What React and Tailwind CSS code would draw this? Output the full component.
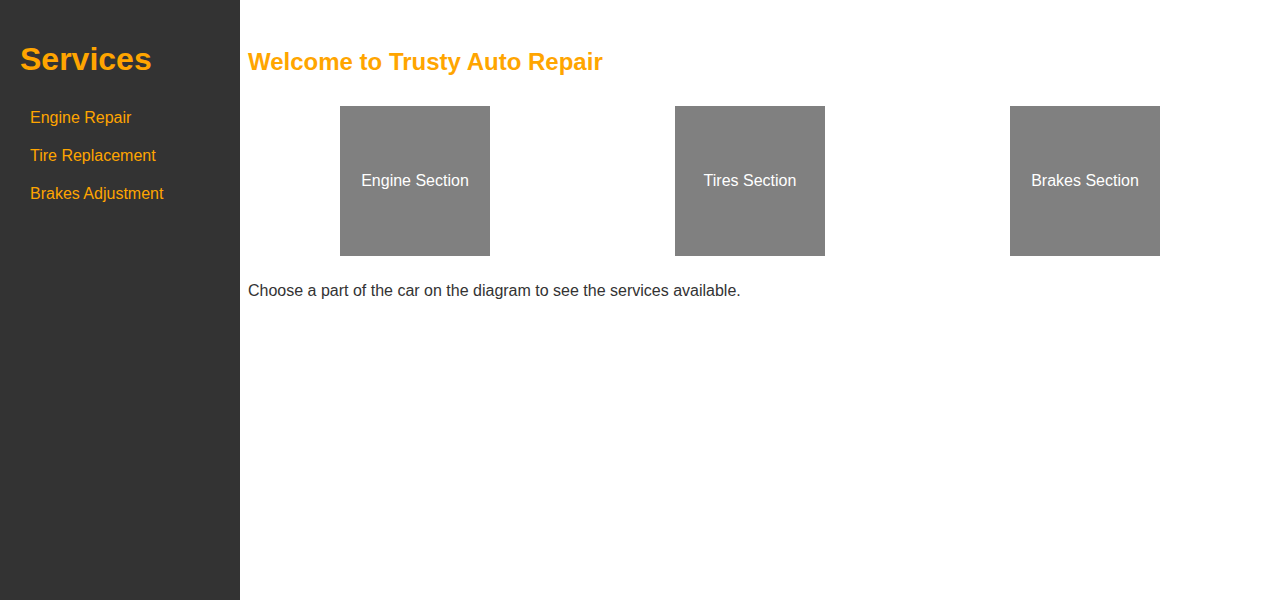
import React from "react";

const links = ["Engine Repair", "Tire Replacement", "Brakes Adjustment"];
const sections = ["Engine Section", "Tires Section", "Brakes Section"];

export default function App() {
  return (
    <div className="flex min-h-[600px] font-['Liberation_Sans',Arial,sans-serif] text-[#333]">
      {/* sidebar */}
      <aside className="w-[240px] shrink-0 bg-[#333] px-5">
        <h1 className="mt-[41px] text-[32px] leading-[37px] font-bold text-[#ffa500]">Services</h1>
        <ul className="mt-[21px] pl-[10px]">
          {links.map((l) => (
            <li key={l} className="py-[10px] text-base leading-[18px]">
              <a href="#" className="text-[#ffa500]">{l}</a>
            </li>
          ))}
        </ul>
      </aside>

      <main className="flex-1 pl-2 pt-12">
        <h2 className="text-2xl leading-[28px] font-bold text-[#ffa500]">Welcome to Trusty Auto Repair</h2>
        <div className="mt-[30px] flex gap-[185px] pl-[92px]">
          {sections.map((s) => (
            <div key={s} className="flex h-[150px] w-[150px] items-center justify-center bg-[#808080] text-base text-white">
              {s}
            </div>
          ))}
        </div>
        <p className="mt-[26px] text-base leading-[18px]">
          Choose a part of the car on the diagram to see the services available.
        </p>
      </main>
    </div>
  );
}
